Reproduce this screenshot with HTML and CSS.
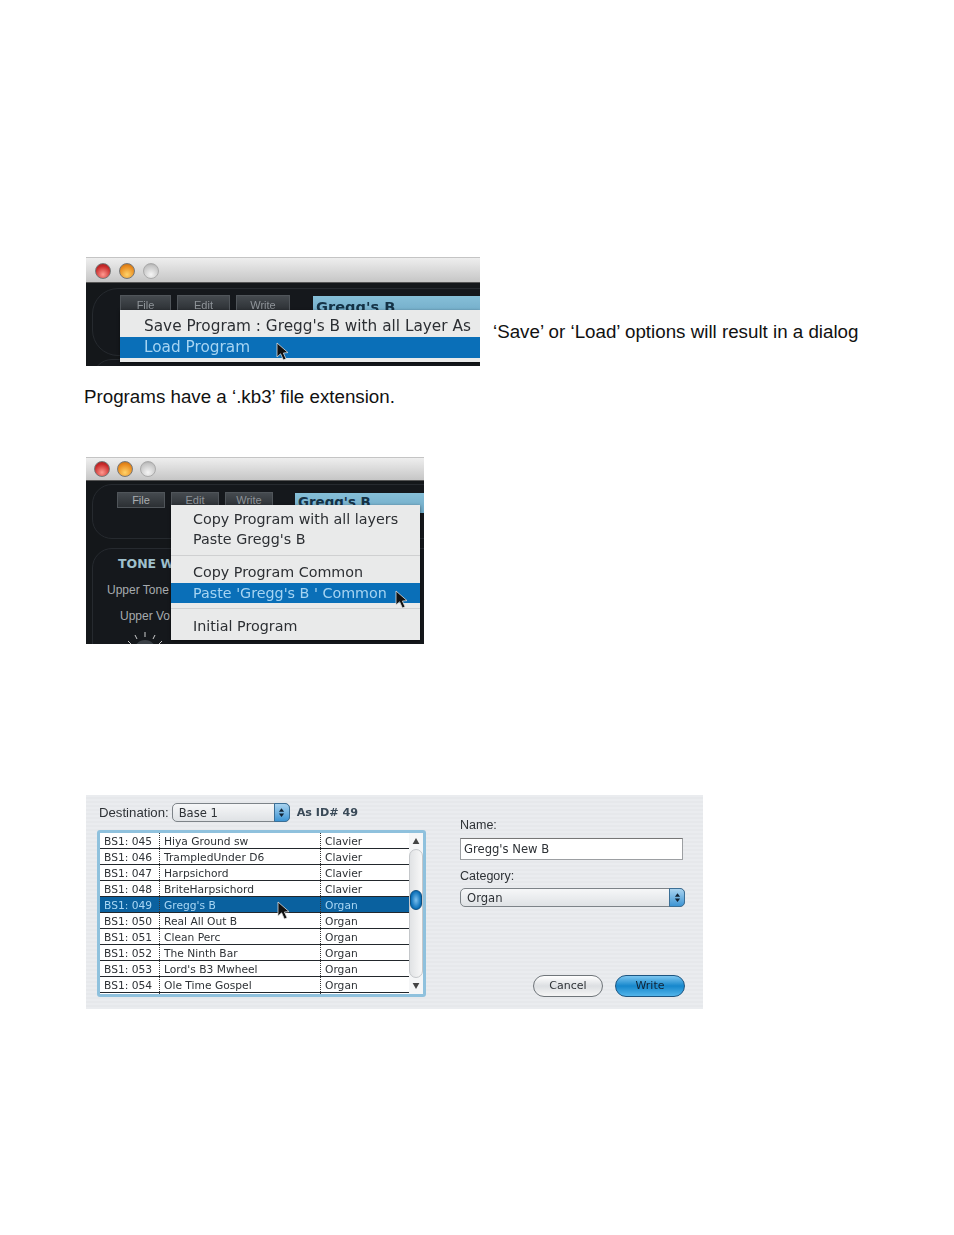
FILE: index.html
```html
<!DOCTYPE html>
<html lang="en">
<head>
<meta charset="utf-8">
<title>Programs</title>
<link rel="stylesheet" href="styles.css">
</head>
<body>
<main class="page">
  <section class="row-one">
    <div class="win win-one">
      <div class="titlebar">
        <i class="light red"></i><i class="light amber"></i><i class="light off"></i>
      </div>
      <div class="body">
        <div class="panel"></div>
        <div class="panel-low"></div>
        <div class="tabs">
          <span class="tab tab-a">File</span><span class="tab tab-b">Edit</span><span class="tab tab-c">Write</span>
        </div>
        <div class="prog">Gregg's B</div>
        <div class="menu">
          <div class="item">Save Program : Gregg's B with all Layer As</div>
          <div class="item sel">Load Program</div>
        </div>
        <svg class="cursor" viewBox="0 0 14 20"><path d="M1 1 L1 15 L4.6 11.8 L7.4 18 L10 16.8 L7.4 11 L12 10.6 Z" fill="#111" stroke="#ddd" stroke-width=".8"/></svg>
      </div>
    </div>
    <p class="copy beside">‘Save’ or ‘Load’ options will result in a dialog</p>
  </section>

  <p class="copy para">Programs have a ‘.kb3’ file extension.</p>

  <section class="win win-two">
    <div class="titlebar">
      <i class="light red"></i><i class="light amber"></i><i class="light off"></i>
    </div>
    <div class="body">
      <div class="panel"></div>
      <div class="panel-tone"></div>
      <div class="tabs">
        <span class="tab tab-a bright">File</span><span class="tab tab-a">Edit</span><span class="tab tab-a">Write</span>
      </div>
      <div class="prog">Gregg's B</div>
      <div class="tone tone-head">TONE W</div>
      <div class="tone tone-a">Upper Tone</div>
      <div class="tone tone-b">Upper Vo</div>
      <svg class="knob" viewBox="0 0 50 24"><path d="M25 2v5M15 5l2 4M35 5l-2 4M8 11l3 3M42 11l-3 3" stroke="#ccc" stroke-width="1"/><circle cx="25" cy="21" r="11" fill="#3a4046"/></svg>
      <div class="menu">
        <div class="item i1">Copy Program with all layers</div>
        <div class="item i2">Paste Gregg's B</div>
        <hr class="sep sep-a">
        <div class="item i3">Copy Program Common</div>
        <div class="item i4 sel">Paste 'Gregg's B ' Common</div>
        <hr class="sep sep-b">
        <div class="item i5">Initial Program</div>
      </div>
      <svg class="cursor" viewBox="0 0 14 20"><path d="M1 1 L1 15 L4.6 11.8 L7.4 18 L10 16.8 L7.4 11 L12 10.6 Z" fill="#111" stroke="#ddd" stroke-width=".8"/></svg>
    </div>
  </section>

  <section class="dialog">
    <div class="left">
      <div class="dest">
        <span>Destination:</span>
        <div class="popup base"><span>Base 1</span><b class="stepper"><svg viewBox="0 0 8 12"><path d="M4 1l3 4H1zM4 11l3-4H1z" fill="#123"/></svg></b></div>
        <strong>As ID# 49</strong>
      </div>
      <div class="listwrap">
        <div class="list">
          <div class="rows">
            <div class="r"><span>BS1: 045</span><span>Hiya Ground sw</span><span>Clavier</span></div>
            <div class="r"><span>BS1: 046</span><span>TrampledUnder D6</span><span>Clavier</span></div>
            <div class="r"><span>BS1: 047</span><span>Harpsichord</span><span>Clavier</span></div>
            <div class="r"><span>BS1: 048</span><span>BriteHarpsichord</span><span>Clavier</span></div>
            <div class="r on"><span>BS1: 049</span><span>Gregg's B</span><span>Organ</span></div>
            <div class="r"><span>BS1: 050</span><span>Real All Out B</span><span>Organ</span></div>
            <div class="r"><span>BS1: 051</span><span>Clean Perc</span><span>Organ</span></div>
            <div class="r"><span>BS1: 052</span><span>The Ninth Bar</span><span>Organ</span></div>
            <div class="r"><span>BS1: 053</span><span>Lord's B3 Mwheel</span><span>Organ</span></div>
            <div class="r"><span>BS1: 054</span><span>Ole Time Gospel</span><span>Organ</span></div>
          </div>
          <div class="scroll">
            <svg class="arrow" viewBox="0 0 8 8"><path d="M4 1l3.4 6H.6z" fill="#444"/></svg>
            <div class="track"><div class="thumb"></div></div>
            <svg class="arrow" viewBox="0 0 8 8"><path d="M4 7L.6 1h6.8z" fill="#444"/></svg>
          </div>
        </div>
        <svg class="cursor" viewBox="0 0 14 20"><path d="M1 1 L1 15 L4.6 11.8 L7.4 18 L10 16.8 L7.4 11 L12 10.6 Z" fill="#111" stroke="#ddd" stroke-width=".8"/></svg>
      </div>
    </div>
    <div class="right">
      <label class="lab">Name:</label>
      <div class="field">Gregg's New B</div>
      <label class="lab cat">Category:</label>
      <div class="popup organ"><span>Organ</span><b class="stepper"><svg viewBox="0 0 8 12"><path d="M4 1l3 4H1zM4 11l3-4H1z" fill="#123"/></svg></b></div>
      <div class="btns">
        <span class="btn">Cancel</span>
        <span class="btn primary">Write</span>
      </div>
    </div>
  </section>
</main>
</body>
</html>
```
FILE: styles.css
```css
* { box-sizing: border-box; }
html, body { margin: 0; background: #fff; }
body { font-family: "DejaVu Sans", sans-serif; color: #222; }
.page { height: 1235px; padding: 257px 0 0 86px; overflow: hidden; }

.copy { margin: 0; font: 18.75px/21px "Liberation Sans", Arial, sans-serif; color: #111; }
.row-one { display: flex; align-items: flex-start; gap: 13px; }
.beside { margin-top: 64px; white-space: nowrap; }
.para { margin: 20px 0 0 -2px; }

.win { position: relative; background: #14171a; overflow: hidden; }
.win-one { width: 394px; height: 109px; flex: none; }
.win-two { width: 338px; height: 187px; margin-top: 50px; }
.titlebar { display: flex; align-items: center; gap: 8px; height: 26px; padding: 1px 0 0 9px;
  background: linear-gradient(#eeeeee, #d6d6d6 60%, #c6c6c6); border-top: 1px solid #c4c4c4; border-bottom: 1px solid #555; }
.win-two .titlebar { height: 24px; padding: 0 0 0 8px; gap: 7px; }
.light { display: block; width: 16px; height: 16px; border-radius: 50%; border: 1px solid #777; }
.red { background: radial-gradient(circle at 50% 75%, #ff9a90, #c92a2a 65%, #8d2020); }
.amber { background: radial-gradient(circle at 50% 75%, #ffd36b, #e8891c 65%, #b0651a); }
.off { background: radial-gradient(circle at 50% 75%, #f5f5f5, #c4c4c4 70%, #9a9a9a); border-color: #aaa; }

.body { position: relative; height: calc(100% - 26px); background: #14171a; filter: blur(.45px); }
.win-two .body { height: calc(100% - 24px); }
.panel { position: absolute; left: 6px; top: 5px; width: 460px; height: 68px; border-radius: 26px; background: #15181c; border: 1px solid #262a2f; }
.panel-low { position: absolute; left: 6px; top: 76px; width: 460px; height: 40px; border-radius: 26px; background: #15181c; border: 1px solid #262a2f; }
.win-two .panel { top: 3px; height: 55px; border-radius: 20px; }
.panel-tone { position: absolute; left: 6px; top: 67px; width: 460px; height: 140px; border-radius: 20px; background: #15181c; border: 1px solid #262a2f; }

.tabs { position: absolute; left: 34px; top: 12px; display: flex; gap: 6px; }
.win-two .tabs { left: 31px; top: 11px; }
.tab { height: 17px; font: 11px/18px "Liberation Sans", sans-serif; text-align: center; color: #8f9499;
  background: linear-gradient(#454a4f, #2c3034); border: 1px solid #50555a; }
.win-two .tab { height: 16px; line-height: 15px; }
.bright { color: #a9adb1; }
.tab-a { width: 51px; }
.tab-b { width: 53px; }
.tab-c { width: 54px; }
.win-two .tab-a { width: 48px; }
.prog { position: absolute; left: 227px; top: 13px; width: 200px; height: 20px; padding: 2px 0 0 3px; font: bold 14.6px/17px "DejaVu Sans", sans-serif; color: #143246; background: linear-gradient(#86bfd8, #6fa9c6); }
.win-two .prog { left: 209px; top: 12px; padding: 1px 0 0 3px; font-size: 13.4px; }

.menu { position: absolute; left: 34px; top: 27px; width: 360px; height: 52px; padding-top: 2px; background: #e9eaea; box-shadow: 0 1px 3px rgba(0,0,0,.5); }
.item { padding-left: 24px; font-size: 15.3px; line-height: 20px; white-space: nowrap; color: #2c2f33; }
.sel { height: 21px; color: #a6d4f2; background: #0a6fb8; }
.win-one .item:first-child { height: 25px; line-height: 28px; }
.win-two .menu { left: 85px; top: 24px; width: 249px; height: 135px; padding-top: 4px; }
.win-two .item { padding-left: 22px; font-size: 14.3px; line-height: 20px; }
.win-two .i3 { margin-top: 6px; }
.win-two .sel { height: 20px; margin-top: 1px; }
.win-two .i5 { margin-top: 7px; }
.sep { height: 1px; margin: 0; border: 0; background: #cfd0d1; }
.sep-a { margin-top: 6px; }
.sep-b { margin-top: 5px; }

.cursor { position: absolute; width: 14px; height: 20px; }
.win-one .cursor { left: 190px; top: 59px; }
.win-two .cursor { left: 309px; top: 109px; }

.tone { position: absolute; font-family: "Liberation Sans", sans-serif; white-space: nowrap; color: #a7abaf; font-size: 12px; }
.tone-head { left: 32px; top: 75px; font: bold 12.5px/16px "DejaVu Sans", sans-serif; color: #9fc0cc; }
.tone-a { left: 21px; top: 102px; }
.tone-b { left: 34px; top: 128px; }
.knob { position: absolute; left: 34px; top: 149px; width: 50px; height: 24px; }

.dialog { display: flex; width: 617px; height: 214px; margin-top: 151px; font-size: 10.7px; color: #2e3236;
  background: repeating-linear-gradient(#eaecef 0 2px, #e6e8eb 2px 4px); filter: blur(.35px); }
.left { width: 374px; padding: 8px 0 0 11px; }
.dest { display: flex; align-items: center; gap: 3px; height: 19px; padding-left: 2px; font-family: "Liberation Sans", sans-serif; font-size: 13.2px; }
.dest strong { margin-left: 4px; font: bold 11.2px "DejaVu Sans", sans-serif; color: #3a4a58; }
.popup { display: flex; align-items: center; justify-content: space-between; font: 11.6px "DejaVu Sans", sans-serif; background: linear-gradient(#f6f7f8, #dfe2e5); border: 1px solid #7d8388; border-radius: 5px; }
.popup.base { width: 118px; height: 19px; padding-left: 6px; }
.stepper { display: flex; align-items: center; justify-content: center; align-self: stretch; width: 16px; margin: -1px; background: linear-gradient(#a9d3ef, #3d95d4); border-radius: 0 5px 5px 0; border: 1px solid #3b6f96; }
.stepper svg { width: 7px; height: 11px; }

.listwrap { position: relative; width: 329px; margin-top: 8px; padding: 3px; background: #8fc1dd; border-radius: 3px; }
.list { display: flex; background: #fff; height: 161px; }
.rows { flex: 1; }
.r { display: grid; grid-template-columns: 59px 161px 1fr; height: 16px; line-height: 17px; border-bottom: 1px solid #22272c; background: #fff; white-space: nowrap; }
.r span { padding-left: 4px; border-left: 1px dotted #333; }
.r span:first-child { border-left: 0; }
.r.on { background: #0a619f; color: #a8d6f4; }
.scroll { display: flex; flex-direction: column; align-items: center; width: 14px; background: #f5f6f7; }
.arrow { flex: none; width: 8px; height: 8px; margin: 4px 0; }
.track { position: relative; flex: 1; width: 100%; background: linear-gradient(90deg, #e1e3e5, #f8f8f8); border-radius: 7px; border: 1px solid #c4c7ca; }
.thumb { position: absolute; left: 0; top: 40px; width: 12px; height: 20px; border-radius: 6px; background: radial-gradient(ellipse at center, #7cc0ee, #0a6fb8 70%); border: 1px solid #0e4f80; }
.listwrap .cursor { left: 180px; top: 71px; }

.right { width: 225px; padding-top: 23px; margin-left: 0; font-family: "Liberation Sans", sans-serif; font-size: 12.5px; }
.lab { display: block; line-height: 14px; }
.field { width: 223px; height: 22px; margin-top: 6px; padding-left: 3px; font: 11.6px/21px "DejaVu Sans", sans-serif; background: #fff; border: 1px solid #9c9fa2; border-top-color: #777; }
.cat { margin-top: 9px; }
.popup.organ { width: 225px; height: 19px; margin-top: 5px; padding-left: 6px; }
.btns { display: flex; justify-content: flex-end; gap: 12px; margin-top: 68px; }
.btn { width: 70px; height: 22px; font: 11px/20px "DejaVu Sans", sans-serif; text-align: center; border-radius: 11px; border: 1px solid #6f757a; background: linear-gradient(#fff, #dcdfe2 50%, #f5f5f5); }
.primary { color: #123; background: linear-gradient(#7cc6f0, #1687cc 50%, #52b4ea); border-color: #1d5580; }
```
